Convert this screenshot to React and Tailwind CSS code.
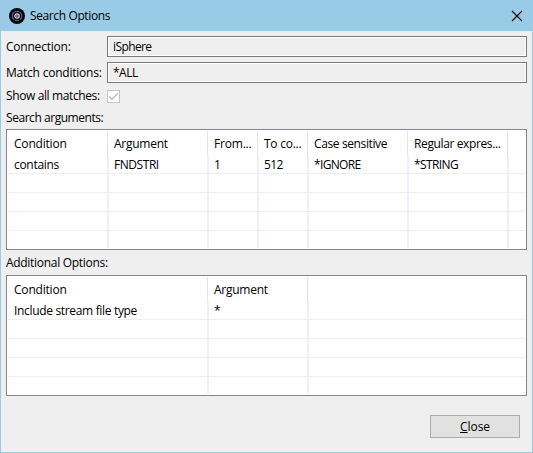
const searchColumns = [
  { title: 'Condition', value: 'contains', width: 'w-[100px]', titleSpace: 'tracking-[-0.2px]', valueSpace: 'tracking-[-0.3px]' },
  { title: 'Argument', value: 'FNDSTRI', width: 'w-[100px]', titleSpace: 'tracking-[-0.25px]', valueSpace: 'tracking-[-0.45px]' },
  { title: 'From...', value: '1', width: 'w-[50px]', titleSpace: 'tracking-[-0.2px]', valueSpace: '' },
  { title: 'To co...', value: '512', width: 'w-[50px]', titleSpace: 'tracking-[-0.25px]', valueSpace: 'tracking-[-0.6px]' },
  { title: 'Case sensitive', value: '*IGNORE', width: 'w-[100px]', titleSpace: 'tracking-[-0.38px]', valueSpace: 'tracking-[-0.65px]' },
  { title: 'Regular expres...', value: '*STRING', width: 'w-[100px]', titleSpace: 'tracking-[-0.38px]', valueSpace: 'tracking-[-0.6px]' },
];

const optionColumns = [
  { title: 'Condition', value: 'Include stream file type', width: 'w-[200px]', titleSpace: 'tracking-[-0.2px]', valueSpace: 'tracking-[-0.33px]' },
  { title: 'Argument', value: '*', width: 'w-[100px]', titleSpace: 'tracking-[-0.25px]', valueSpace: '' },
];

function Field({ label, value, space, valueSpace }) {
  return (
    <div className="flex h-[22px]">
      <label className={`w-[101px] shrink-0 leading-[22px] ${space}`}>{label}</label>
      <div className={`h-[21px] flex-1 border border-[#7a7a7a] bg-[#efefef] pl-[5px] leading-[20px] ring-1 ring-white ring-inset ${valueSpace}`}>
        {value}
      </div>
    </div>
  );
}

function Table({ columns }) {
  return (
    <div className="h-[121px] border border-[#828790] bg-white p-px">
      <div className="flex h-[24px]">
        {columns.map((c) => (
          <div key={c.title} className={`h-full shrink-0 border-r border-[#e5e5e5] pl-[6px] leading-[25px] ${c.width} ${c.titleSpace}`}>
            {c.title}
          </div>
        ))}
      </div>
      {[0, 1, 2, 3, 4].map((row) => (
        <div key={row} className={`flex ${row === 4 ? 'h-[17px]' : 'h-[19px] border-b border-[#efefef]'}`}>
          {columns.map((c, i) => (
            <div key={c.title} className={`flex shrink-0 ${c.width}`}>
              <div className={`flex-1 leading-[19px] ${i === 0 ? 'pl-[6px]' : 'border-l border-[#edf2fa] pl-[5px]'} ${c.valueSpace}`}>
                {row === 0 ? c.value : ''}
              </div>
              <div className="w-px bg-[#edf2fa]" />
            </div>
          ))}
          <div className="w-px bg-[#edf2fa]" />
        </div>
      ))}
    </div>
  );
}

export default function App() {
  return (
    <div className="flex h-[453px] w-[533px] flex-col border border-[#99cbe6] bg-[#efefef] font-['Open_Sans',sans-serif] text-[12px] whitespace-nowrap text-black">
      <header className="flex h-[30px] shrink-0 items-center bg-[#99cbe6] pr-[9px] pl-[8px]">
        <svg width="16" height="16" viewBox="0 0 16 16" className="shrink-0">
          <circle cx="8" cy="8" r="8" fill="#050508" />
          <path d="M5.5 4A4.7 4.7 0 0 0 5 11.6M10.5 4A4.7 4.7 0 0 1 11 11.6" fill="none" stroke="#5753a4" strokeWidth="1.4" />
          <path d="M6 3.7h4M6 12.3h4" stroke="#77767e" />
          <circle cx="8" cy="8" r="2.2" fill="none" stroke="#dddde7" strokeWidth="1.2" />
          <circle cx="8" cy="8" r=".8" fill="#fff" />
        </svg>
        <h1 className="flex-1 pl-[5px] tracking-[-0.38px]">Search Options</h1>
        <svg width="12" height="12" viewBox="0 0 12 12" className="shrink-0" fill="none" stroke="#000" strokeWidth="1.1">
          <path d="M1 1l10 10M11 1L1 11" />
        </svg>
      </header>
      <main className="flex flex-col px-[5px] pt-[5px]">
        <Field label="Connection:" value="iSphere" space="tracking-[-0.22px]" valueSpace="tracking-[-0.6px]" />
        <div className="h-[4px]" />
        <Field label="Match conditions:" value="*ALL" space="tracking-[-0.22px]" valueSpace="tracking-[-0.5px]" />
        <div className="mt-[4px] flex h-[16px] items-center">
          <span className="w-[101px] tracking-[-0.38px]">Show all matches:</span>
          <svg width="13" height="13" viewBox="0 0 13 13">
            <rect x=".5" y=".5" width="12" height="12" fill="#fff" stroke="#c4c4c4" />
            <path d="M2 6.3l3 3 5.8-6" fill="none" stroke="#bcbcbc" strokeWidth="1.3" />
          </svg>
        </div>
        <div className="mt-[5px] h-[20px] leading-[17px] tracking-[-0.45px]">Search arguments:</div>
        <Table columns={searchColumns} />
        <div className="h-[25px] pt-[5px] leading-[16px] tracking-[-0.3px]">Additional Options:</div>
        <Table columns={optionColumns} />
        <button className="mt-[19px] mr-[7px] h-[23px] w-[90px] self-end border border-[#adadad] bg-[#e1e1e1] leading-[21px] tracking-[-0.1px]">
          <span className="underline">C</span>lose
        </button>
      </main>
    </div>
  );
}
